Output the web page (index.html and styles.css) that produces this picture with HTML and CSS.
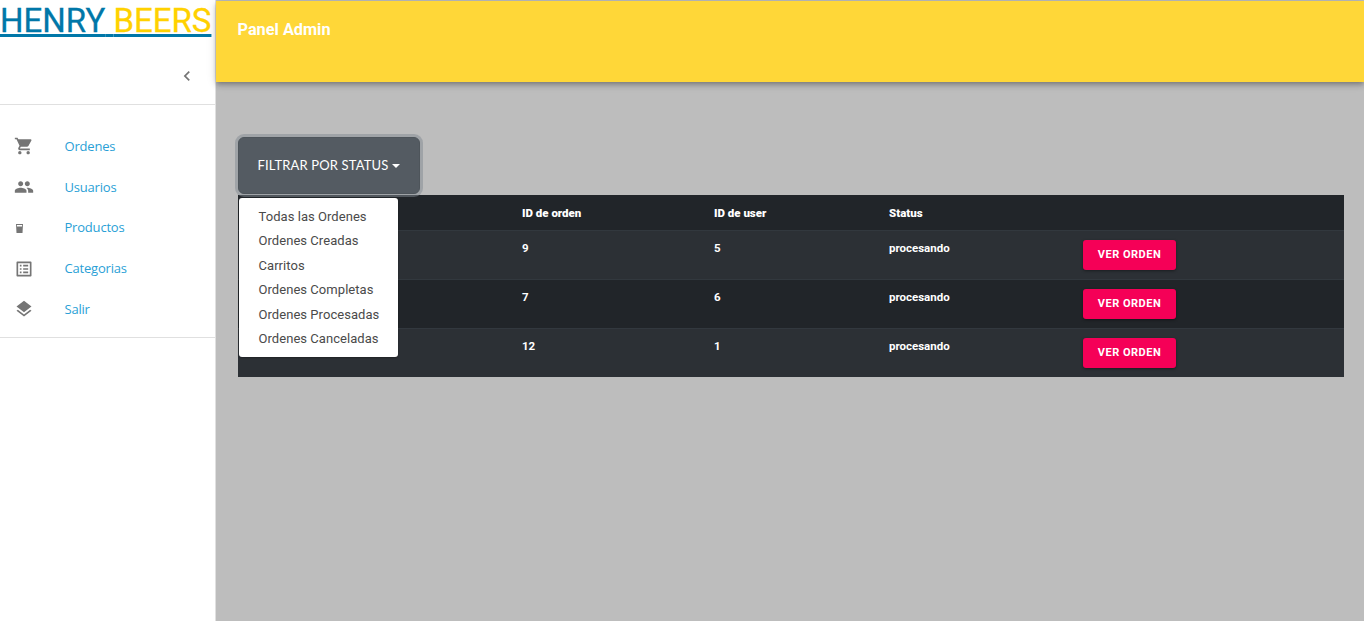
FILE: index.html
```html
<!DOCTYPE html>
<html lang="es">
<head>
<meta charset="utf-8">
<title>Panel Admin</title>
<link rel="stylesheet" href="styles.css">
</head>
<body>

<div class="sidebar">
  <a class="brand" href="#"><span class="brand-a">HENRY</span> <span class="brand-b">BEERS</span></a>
  <div class="collapse-row">
    <svg class="chev" viewBox="0 0 24 24"><path d="M15.41 7.41 14 6l-6 6 6 6 1.41-1.41L10.83 12z"/></svg>
  </div>
  <ul class="nav">
    <li>
      <svg class="ico" viewBox="0 0 24 24"><path d="M7 18c-1.1 0-1.99.9-1.99 2S5.900 22 7 22s2-.9 2-2-.9-2-2-2zM1 2v2h2l3.600 7.590-1.350 2.450c-.16.280-.25.610-.25.960 0 1.100.9 2 2 2h12v-2H7.420c-.14 0-.25-.11-.25-.25l.03-.12.9-1.630h7.450c.75 0 1.410-.41 1.750-1.030l3.580-6.490c.08-.14.12-.31.12-.48 0-.55-.45-1-1-1H5.210l-.94-2H1zm16 16c-1.100 0-1.990.9-1.990 2s.89 2 1.990 2 2-.9 2-2-.9-2-2-2z"/></svg>
      <a href="#">Ordenes</a>
    </li>
    <li>
      <svg class="ico" viewBox="0 0 24 24"><path d="M16 11c1.660 0 2.990-1.340 2.990-3S17.660 5 16 5s-3 1.340-3 3 1.340 3 3 3zm-8 0c1.660 0 2.990-1.340 2.990-3S9.660 5 8 5 5 6.340 5 8s1.340 3 3 3zm0 2c-2.330 0-7 1.170-7 3.500V19h14v-2.500c0-2.330-4.670-3.500-7-3.500zm8 0c-.29 0-.62.02-.97.05 1.160.84 1.970 1.970 1.970 3.450V19h6v-2.500c0-2.330-4.670-3.500-7-3.500z"/></svg>
      <a href="#">Usuarios</a>
    </li>
    <li>
      <svg class="ico" viewBox="0 0 24 24"><path d="M2.400 7.200h8.400L10.200 18H3zM3.500 8.300l.1 1.800h6l.1-1.800z" fill-rule="evenodd"/></svg>
      <a href="#">Productos</a>
    </li>
    <li>
      <svg class="ico" viewBox="0 0 24 24"><path d="M19 5v14H5V5h14m1.100-2H3.900c-.5 0-.9.4-.9.9v16.200c0 .4.400.9.900.9h16.200c.4 0 .9-.5.900-.9V3.900c0-.5-.5-.9-.9-.9zM11 7h6v2h-6V7zm0 4h6v2h-6v-2zm0 4h6v2h-6v-2zM7 7h2v2H7V7zm0 4h2v2H7v-2zm0 4h2v2H7v-2z"/></svg>
      <a href="#">Categorias</a>
    </li>
    <li>
      <svg class="ico" viewBox="0 0 24 24"><path d="m11.990 18.540-7.370-5.730L3 14.070l9 7 9-7-1.630-1.270-7.380 5.740zM12 16l7.360-5.730L21 9l-9-7-9 7 1.630 1.270L12 16z"/></svg>
      <a href="#">Salir</a>
    </li>
  </ul>
</div>

<div class="main">
  <div class="topbar"><h1>Panel Admin</h1></div>

  <div class="content">
    <div class="filter">
      <button class="filter-btn" type="button">FILTRAR POR STATUS<span class="caret"></span></button>
      <div class="menu">
        <a href="#">Todas las Ordenes</a>
        <a href="#">Ordenes Creadas</a>
        <a href="#">Carritos</a>
        <a href="#">Ordenes Completas</a>
        <a href="#">Ordenes Procesadas</a>
        <a href="#">Ordenes Canceladas</a>
      </div>
    </div>

    <table class="orders">
      <thead>
        <tr><th class="c1"></th><th class="c2">ID de orden</th><th class="c3">ID de user</th><th class="c4">Status</th><th></th></tr>
      </thead>
      <tbody>
        <tr><td></td><td>9</td><td>5</td><td>procesando</td><td><button class="see" type="button">VER ORDEN</button></td></tr>
        <tr><td></td><td>7</td><td>6</td><td>procesando</td><td><button class="see" type="button">VER ORDEN</button></td></tr>
        <tr><td></td><td>12</td><td>1</td><td>procesando</td><td><button class="see" type="button">VER ORDEN</button></td></tr>
      </tbody>
    </table>
  </div>
</div>

</body>
</html>
```

FILE: styles.css
```css
html, body {margin: 0; padding: 0; height: 100%;}
body {
  display: flex; overflow: hidden; background: #bdbdbd;
  font-family: Roboto, "Liberation Sans", sans-serif;
}
ul {margin: 0; padding: 0; list-style: none;}
a {text-decoration: none;}

/*sidebar*/
.sidebar {
  width: 215px; height: 621px; flex: none; background: #fff;
  border-right: 1px solid #e0e0e0;
}
.brand {
  display: block; height: 38px; padding-top: 3px; margin-bottom: -3px; white-space: nowrap;
  font-size: 33px; line-height: 36px; -webkit-text-stroke: .3px;
  text-decoration: underline; text-decoration-color: #0077a8;
  text-decoration-thickness: 3px; text-underline-offset: 2px;
}
.brand-a {color: #0077a8;}
.brand-b {color: #ffd100;}
.collapse-row {
  display: flex; justify-content: flex-end; align-items: center;
  height: 67px; padding: 9px 18px 0 0; box-sizing: border-box; border-bottom: 1px solid #e0e0e0;
}
.chev {width: 20px; height: 20px; fill: #757575;}
.nav {padding: 20.6px 0 7.4px; border-bottom: 1px solid #e0e0e0;}
.nav li {display: flex; align-items: center; height: 40.75px; padding-left: 14px;}
.ico {width: 20px; height: 20px; margin-top: 1px; fill: #757575; flex: none;}
.nav a {
  margin-left: 30.5px; color: #2a9fd6; letter-spacing: -.2px;
  font: 13px "Open Sans", Roboto, sans-serif;
}

/*header*/
.main {flex: 1; min-width: 0;}
.topbar {
  height: 81px; margin-top: 1px; background: #ffd738;
  box-shadow: 0 2px 4px -1px rgba(0,0,0,.2), 0 4px 5px 0 rgba(0,0,0,.14), 0 1px 10px 0 rgba(0,0,0,.12);
}
.topbar h1 {
  margin: 0; padding: 17px 0 0 21.5px; color: #fff;
  font-size: 16.3px; line-height: 24px; font-weight: 700;
}

/*content*/
.content {padding: 55px 20px 0 22px;}
.filter {position: relative;}
.filter-btn {
  display: block; width: 182px; height: 57px; padding: 0 0 1px; color: #fff;
  background: #545b62; border: 1px solid #4e555b; border-radius: 6px;
  box-shadow: 0 0 0 3px rgba(130,138,145,.5);
  font: 13px Lato, "Open Sans", sans-serif; letter-spacing: .15px;
}
.caret {
  display: inline-block; margin-left: 4px; vertical-align: 2px;
  border-top: 4px solid #fff; border-left: 4px solid transparent; border-right: 4px solid transparent;
}
.menu {
  position: absolute; top: 61px; left: 1px; width: 159px; height: 159px;
  padding: 7px 0 0; box-sizing: border-box; background: #fff; border-radius: 3px;
  box-shadow: 0 1px 2px rgba(0,0,0,.3);
}
.menu a {
  display: block; padding-left: 19.5px; height: 24.4px; color: #4a4a4a;
  font-size: 13px; line-height: 24px; letter-spacing: .05px;
}

/*table*/
.orders {
  width: 1106px; margin-top: 1px; border-collapse: collapse; table-layout: fixed;
  color: #fff; background: #212529; font-size: 11.5px;
}
.orders .c1 {width: 271px;}
.orders .c2 {width: 192px;}
.orders .c3 {width: 175px;}
.orders .c4 {width: 194px;}
.orders th {height: 35px; padding: 2px 13px 0; box-sizing: border-box; text-align: left; font-weight: 900; vertical-align: middle;}
.orders td {height: 49px; padding: 10px 13px 0; box-sizing: border-box; vertical-align: top; font-weight: 700; border-top: 1px solid #32383e;}
.orders tbody tr:nth-child(odd) {background: #2c3035;}
.see {
  display: block; width: 93px; height: 30px; margin: -1px 0 0 0; padding: 0; color: #fff;
  background: #f50057; border: 0; border-radius: 3px;
  box-shadow: 0 1px 3px rgba(0,0,0,.4);
  font: 700 11px Roboto, sans-serif; letter-spacing: .5px;
}
```
